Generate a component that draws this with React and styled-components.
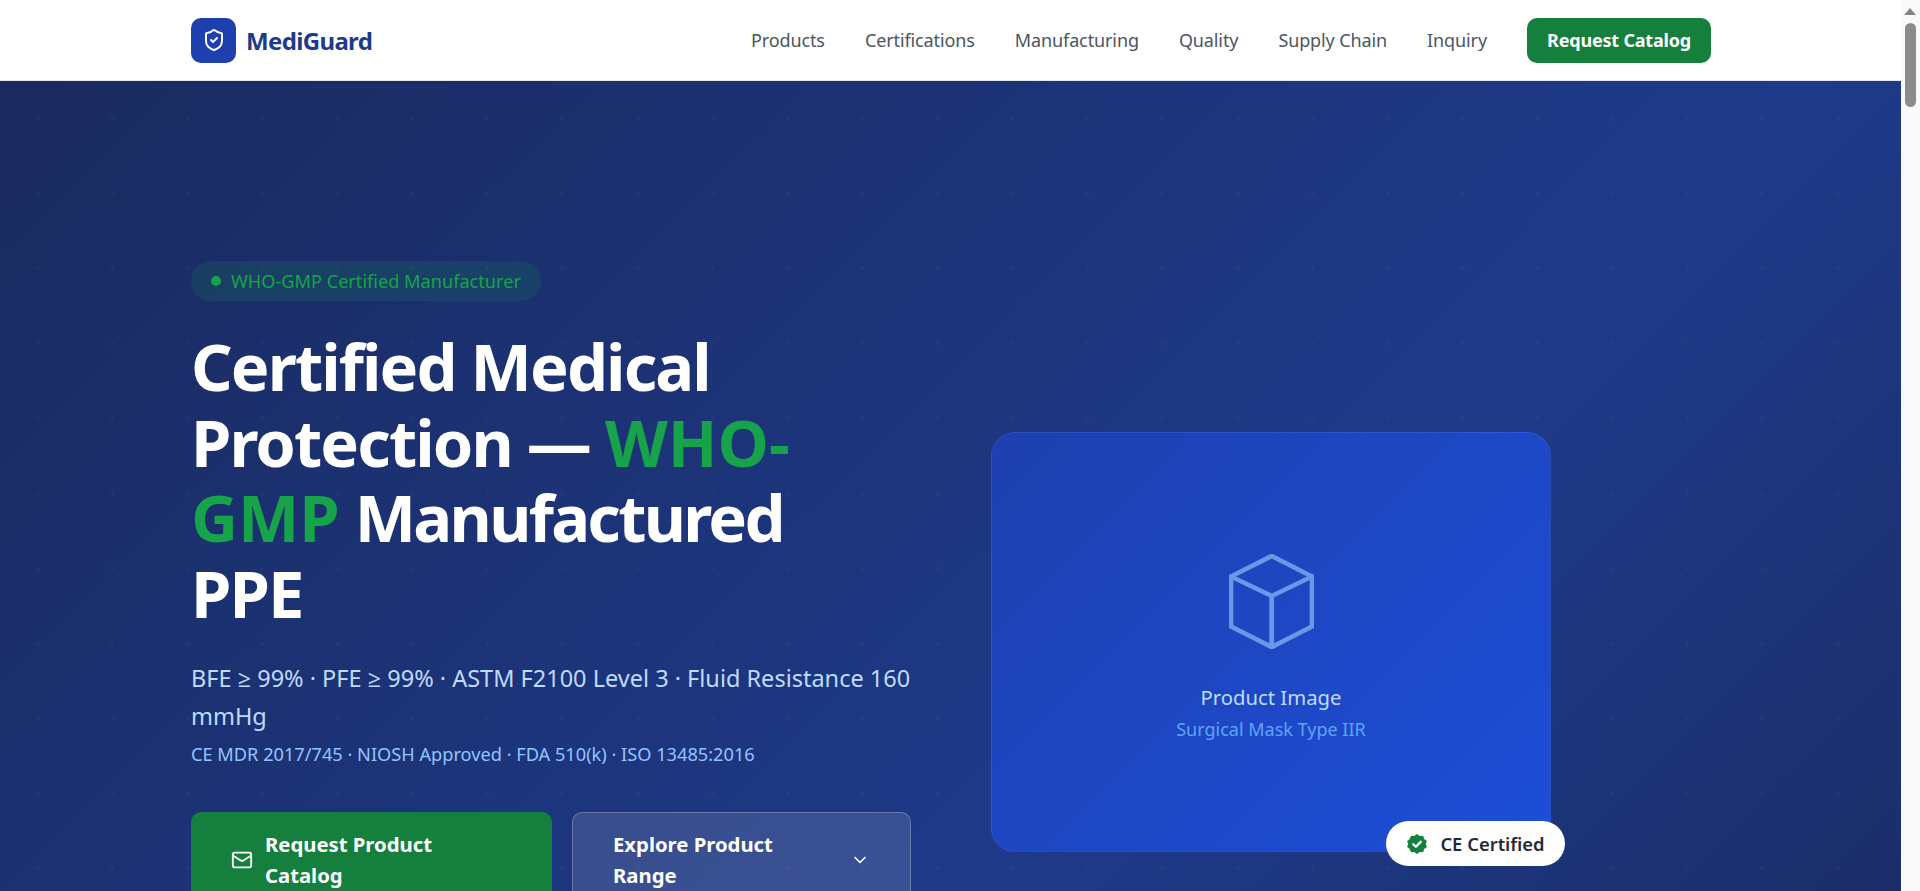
import React from 'react';
import styled, { createGlobalStyle } from 'styled-components';
import { ShieldCheck, Mail, ChevronDown } from 'lucide-react';

const Global = createGlobalStyle`
  * { box-sizing: border-box; }
  html, body { overflow-x: hidden; }
  body { margin: 0; background: #fff; font-family: "Noto Sans", "Open Sans", Arial, sans-serif; color: #1f2937; }
`;

const Page = styled.div`
  width: calc(100vw - 18px);
`;
const Rail = styled.div`
  position: fixed;
  top: 0;
  right: 0;
  bottom: 0;
  width: 19px;
  background: #f9f9f9;
`;
const RailArrow = styled.div`
  position: absolute;
  top: 8px;
  left: 3px;
  width: 0;
  height: 0;
  border-left: 6.5px solid transparent;
  border-right: 6.5px solid transparent;
  border-bottom: 7px solid #858585;
`;
const RailThumb = styled.div`
  position: absolute;
  top: 23px;
  left: 4px;
  width: 11px;
  height: 84px;
  border-radius: 6px;
  background: #8b8b8b;
`;
const Nav = styled.nav`
  height: 81px;
  background: #fff;
  border-bottom: 1px solid #e5e7eb;
  display: flex;
  justify-content: center;
`;
const NavInner = styled.div`
  width: 1520px;
  display: flex;
  align-items: center;
  justify-content: space-between;
`;
const Brand = styled.div`
  display: flex;
  align-items: center;
  gap: 10px;
`;
const LogoMark = styled.div`
  width: 45px;
  height: 45px;
  border-radius: 10px;
  background: #1e40af;
  color: #fff;
  display: flex;
  align-items: center;
  justify-content: center;
`;
const BrandName = styled.span`
  font-size: 24px;
  font-weight: 700;
  color: #1e3a8a;
  letter-spacing: -0.65px;
`;
const NavLinks = styled.div`
  display: flex;
  align-items: center;
  gap: 40px;
`;
const NavLink = styled.a`
  font-size: 18px;
  letter-spacing: -0.11px;
  color: #4b5563;
`;
const NavCta = styled.a`
  height: 45px;
  width: 184px;
  border-radius: 10px;
  background: #15803d;
  color: #fff;
  font-size: 18px;
  font-weight: 700;
  letter-spacing: -0.2px;
  display: flex;
  align-items: center;
  justify-content: center;
`;
const Hero = styled.section`
  height: 1122px;
  padding: 180px 0;
  display: flex;
  justify-content: center;
  background:
    radial-gradient(circle at center, rgba(255, 255, 255, 0.022) 2px, transparent 2.5px) 0 0 / 75px 75px,
    linear-gradient(135deg, #1a2a5e 0%, #1e3a8a 60%, #1a2a5e 100%);
`;
const HeroGrid = styled.div`
  width: 1520px;
  display: grid;
  grid-template-columns: 720px 720px;
  gap: 80px;
  align-items: center;
`;
const HeroCopy = styled.div`
  display: flex;
  flex-direction: column;
  align-items: flex-start;
  height: 762px;
`;
const Pill = styled.div`
  height: 40px;
  padding: 0 20px;
  border-radius: 20px;
  background: rgba(22, 163, 74, 0.15);
  color: #16a34a;
  font-size: 18.15px;
  display: flex;
  align-items: center;
  gap: 10px;
`;
const PillDot = styled.span`
  width: 10px;
  height: 10px;
  border-radius: 50%;
  background: #16a34a;
`;
const Title = styled.h1`
  margin: 28px 0 0;
  max-width: 650px;
  font-size: 65px;
  line-height: 75.5px;
  letter-spacing: -1.9px;
  font-weight: 700;
  color: #fff;
`;
const Accent = styled.span`
  color: #16a34a;
  letter-spacing: 0;
`;
const TightWord = styled.span`
  letter-spacing: -2.7px;
`;
const Lead = styled.p`
  margin: 29px 0 0;
  font-size: 23.5px;
  line-height: 37.5px;
  color: #bfdbfe;
`;
const Fine = styled.p`
  margin: 4px 0 0;
  font-size: 18.2px;
  line-height: 30px;
  color: #93c5fd;
`;
const Actions = styled.div`
  margin-top: 43px;
  width: 100%;
  display: flex;
  gap: 20px;
`;
const PrimaryAction = styled.a`
  flex: 0 0 361px;
  height: 96px;
  padding: 0 40px;
  display: flex;
  align-items: center;
  gap: 12px;
  border-radius: 10px;
  background: #15803d;
  color: #fff;
  font-size: 20.3px;
  line-height: 30.6px;
  font-weight: 700;
`;
const SecondaryAction = styled.a`
  flex: 0 0 339px;
  height: 96px;
  padding: 0 40px;
  display: flex;
  align-items: center;
  justify-content: space-between;
  border-radius: 10px;
  background: rgba(255, 255, 255, 0.12);
  border: 1px solid rgba(255, 255, 255, 0.25);
  color: #fff;
  font-size: 20.3px;
  line-height: 30.6px;
  font-weight: 700;
`;
const ActionLabel = styled.span`
  max-width: 200px;
`;
const Visual = styled.div`
  position: relative;
  width: 560px;
  height: 420px;
  padding-top: 14px;
  border-radius: 24px;
  background: linear-gradient(135deg, #1e40af, #1d4ed8);
  border: 1px solid rgba(255, 255, 255, 0.06);
  display: flex;
  flex-direction: column;
  align-items: center;
  justify-content: center;
  color: #bfdbfe;
`;
const CubeIcon = styled.svg`
  width: 85px;
  height: 95px;
  margin-bottom: 33px;
`;
const VisualTitle = styled.div`
  font-size: 20.3px;
  line-height: 30px;
`;
const VisualSub = styled.div`
  margin-top: 2px;
  font-size: 18px;
  line-height: 30px;
  color: #60a5fa;
`;
const CertBadge = styled.div`
  position: absolute;
  right: -15px;
  bottom: -15px;
  height: 45px;
  width: 179px;
  border-radius: 23px;
  background: #fff;
  color: #1f2937;
  font-size: 18.4px;
  font-weight: 600;
  display: flex;
  align-items: center;
  justify-content: center;
  gap: 12px;
`;

const navItems = ['Products', 'Certifications', 'Manufacturing', 'Quality', 'Supply Chain', 'Inquiry'];

export default function App() {
  return (
    <Page>
      <Global />
      <Nav>
        <NavInner>
          <Brand>
            <LogoMark><ShieldCheck size={24} strokeWidth={2} /></LogoMark>
            <BrandName>MediGuard</BrandName>
          </Brand>
          <NavLinks>
            {navItems.map((n) => <NavLink key={n}>{n}</NavLink>)}
            <NavCta>Request Catalog</NavCta>
          </NavLinks>
        </NavInner>
      </Nav>
      <Hero>
        <HeroGrid>
          <HeroCopy>
            <Pill><PillDot />WHO-GMP Certified Manufacturer</Pill>
            <Title>Certified Medical Protection — <Accent>WHO-GMP</Accent> <TightWord>Manufactured</TightWord> PPE</Title>
            <Lead>BFE ≥ 99% · PFE ≥ 99% · ASTM F2100 Level 3 · Fluid Resistance 160 mmHg</Lead>
            <Fine>CE MDR 2017/745 · NIOSH Approved · FDA 510(k) · ISO 13485:2016</Fine>
            <Actions>
              <PrimaryAction><Mail size={22} /><ActionLabel>Request Product Catalog</ActionLabel></PrimaryAction>
              <SecondaryAction><ActionLabel>Explore Product Range</ActionLabel><ChevronDown size={20} /></SecondaryAction>
            </Actions>
          </HeroCopy>
          <Visual>
            <CubeIcon viewBox="0 0 85 95" fill="none" stroke="#6b97e9" strokeWidth="4.7" strokeLinejoin="round" strokeLinecap="round">
              <path d="M42.7 2L83 22.5V72.5L42.7 93L2 72.5V22.5Z" />
              <path d="M2 22.5L42.7 42L83 22.5M42.7 42V93" />
            </CubeIcon>
            <VisualTitle>Product Image</VisualTitle>
            <VisualSub>Surgical Mask Type IIR</VisualSub>
            <CertBadge>
              <svg width="22" height="22" viewBox="0 0 24 24" aria-hidden="true">
                <path fill="#15803d" d="M12 1l3 2.2 3.7-.2 1.1 3.5 3 2.2L21.6 12l1.2 3.3-3 2.2-1.1 3.5-3.7-.2L12 23l-3-2.2-3.7.2-1.1-3.5-3-2.2L2.4 12 1.2 8.7l3-2.2L5.3 3 9 3.2z" />
                <path fill="none" stroke="#fff" strokeWidth="2.6" strokeLinecap="round" strokeLinejoin="round" d="M8 12.3l2.8 2.7L16 9.6" />
              </svg>
              CE Certified
            </CertBadge>
          </Visual>
        </HeroGrid>
      </Hero>
      <Rail><RailArrow /><RailThumb /></Rail>
    </Page>
  );
}
